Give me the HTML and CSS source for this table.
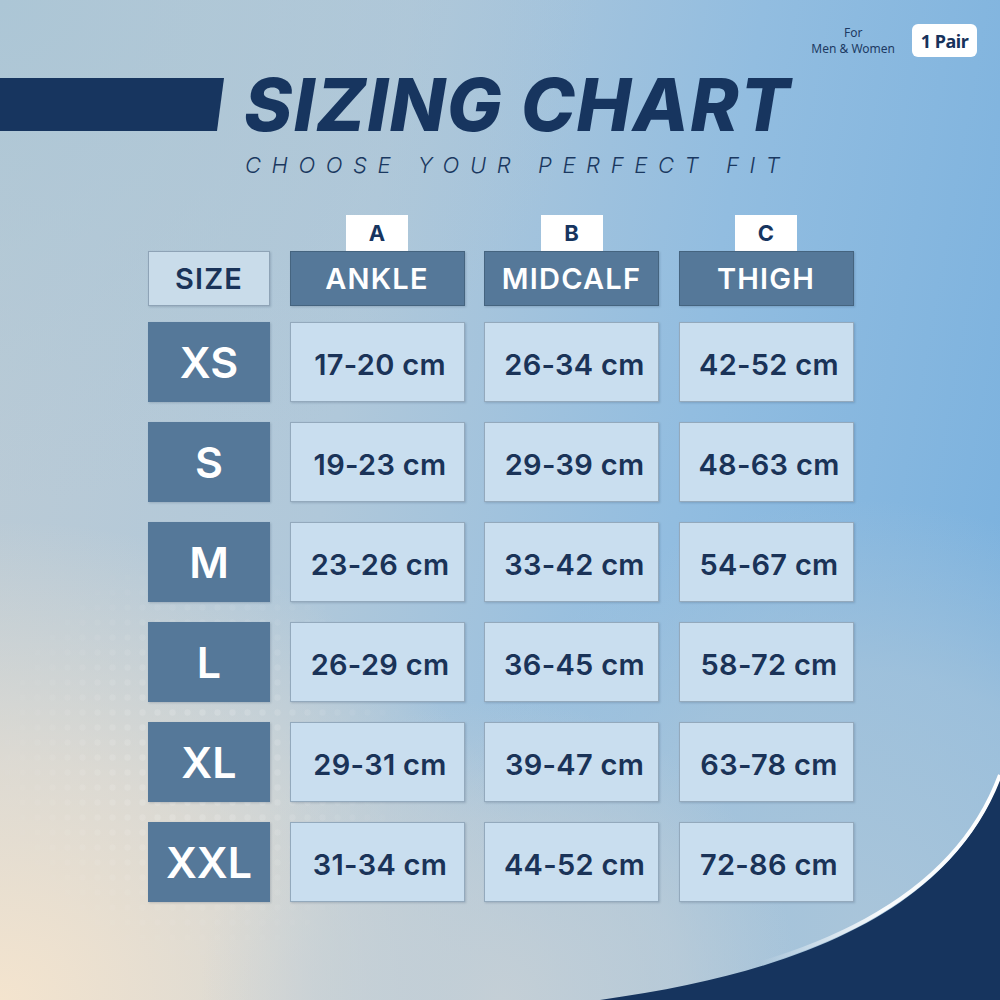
FILE: index.html
```html
<!DOCTYPE html>
<html>
<head>
<meta charset="utf-8">
<link rel="stylesheet" href="styles.css">
</head>
<body>
<div class="page">
  <svg class="deco" width="1000" height="1000" viewBox="0 0 1000 1000">
    <defs>
      <linearGradient id="edge" x1="760" y1="0" x2="1000" y2="0" gradientUnits="userSpaceOnUse">
        <stop offset="0" stop-color="#fff" stop-opacity="0"/>
        <stop offset="0.5" stop-color="#fff" stop-opacity="0.9"/>
        <stop offset="1" stop-color="#fff" stop-opacity="1"/>
      </linearGradient>
      <pattern id="dots" width="15" height="15" patternUnits="userSpaceOnUse">
        <circle cx="7.5" cy="7.5" r="3.2" fill="#fff" fill-opacity="0.2"/>
      </pattern>
      <radialGradient id="dotmask" cx="200" cy="760" r="220" gradientUnits="userSpaceOnUse">
        <stop offset="0" stop-color="#fff" stop-opacity="1"/>
        <stop offset="1" stop-color="#fff" stop-opacity="0"/>
      </radialGradient>
      <mask id="dm"><rect width="1000" height="1000" fill="url(#dotmask)"/></mask>
      <radialGradient id="haze" cx="860" cy="930" r="430" gradientUnits="userSpaceOnUse">
        <stop offset="0" stop-color="#a9c5da" stop-opacity="1"/>
        <stop offset="0.6" stop-color="#a9c5da" stop-opacity="0.7"/>
        <stop offset="1" stop-color="#a9c5da" stop-opacity="0"/>
      </radialGradient>
      <radialGradient id="haze2" cx="500" cy="1000" r="300" gradientUnits="userSpaceOnUse">
        <stop offset="0" stop-color="#c4cfd6" stop-opacity="1"/>
        <stop offset="0.6" stop-color="#c4cfd6" stop-opacity="0.6"/>
        <stop offset="1" stop-color="#c4cfd6" stop-opacity="0"/>
      </radialGradient>
    </defs>
    <rect width="1000" height="1000" fill="url(#haze)"/>
    <rect width="1000" height="1000" fill="url(#haze2)"/>
    <rect width="1000" height="1000" fill="url(#dots)" mask="url(#dm)"/>
    <path d="M1000,778 C955,900 820,970 600,1000 L1000,1000 Z" fill="#16345e"/>
    <path d="M1000,775 C955,897 820,967 600,997" fill="none" stroke="url(#edge)" stroke-width="4"/>
  </svg>

  <div class="content">
    <div class="topbar">
      <div class="for">For<br>Men &amp; Women</div>
      <div class="pair">1 Pair</div>
    </div>

    <div class="title-row">
      <div class="bar"></div>
      <h1 class="title">SIZING CHART</h1>
    </div>
    <p class="subtitle">CHOOSE YOUR PERFECT FIT</p>

    <div class="table">
      <div class="letters">
        <div></div>
        <div class="letter-cell"><span class="letter">A</span></div>
        <div class="letter-cell"><span class="letter">B</span></div>
        <div class="letter-cell"><span class="letter">C</span></div>
      </div>
      <div class="row head">
        <div class="cell size-head">SIZE</div>
        <div class="cell col-head">ANKLE</div>
        <div class="cell col-head">MIDCALF</div>
        <div class="cell col-head">THIGH</div>
      </div>
      <div class="body">
        <div class="row">
          <div class="cell size">XS</div>
          <div class="cell val">17-20 cm</div>
          <div class="cell val">26-34 cm</div>
          <div class="cell val">42-52 cm</div>
        </div>
        <div class="row">
          <div class="cell size">S</div>
          <div class="cell val">19-23 cm</div>
          <div class="cell val">29-39 cm</div>
          <div class="cell val">48-63 cm</div>
        </div>
        <div class="row">
          <div class="cell size">M</div>
          <div class="cell val">23-26 cm</div>
          <div class="cell val">33-42 cm</div>
          <div class="cell val">54-67 cm</div>
        </div>
        <div class="row">
          <div class="cell size">L</div>
          <div class="cell val">26-29 cm</div>
          <div class="cell val">36-45 cm</div>
          <div class="cell val">58-72 cm</div>
        </div>
        <div class="row">
          <div class="cell size">XL</div>
          <div class="cell val">29-31 cm</div>
          <div class="cell val">39-47 cm</div>
          <div class="cell val">63-78 cm</div>
        </div>
        <div class="row">
          <div class="cell size">XXL</div>
          <div class="cell val">31-34 cm</div>
          <div class="cell val">44-52 cm</div>
          <div class="cell val">72-86 cm</div>
        </div>
      </div>
    </div>
  </div>
</div>
</body>
</html>
```

FILE: styles.css
```css
* { box-sizing: border-box; }
html, body { margin: 0; padding: 0; }
body { width: 1000px; height: 1000px; overflow: hidden; font-family: Inter, "Noto Sans", sans-serif; }

.page {
  position: relative;
  width: 1000px;
  height: 1000px;
  overflow: hidden;
  background:
    radial-gradient(ellipse 560px 480px at 0% 100%, rgba(244,228,206,1) 0%, rgba(240,226,208,0.65) 50%, rgba(240,226,208,0) 100%),
    radial-gradient(ellipse 600px 500px at 0% 0%, rgba(172,198,214,1) 0%, rgba(172,198,214,0) 100%),
    linear-gradient(100deg, #bccbd5 0%, #b0c8da 35%, #92bde0 65%, #78b0de 100%);
}

.deco { position: absolute; left: 0; top: 0; z-index: 0; }
.content { position: relative; z-index: 1; }

.topbar {
  display: flex;
  justify-content: flex-end;
  align-items: center;
  gap: 17px;
  padding: 24px 23px 0 0;
  height: 57px;
}
.for {
  font-family: "Noto Sans", sans-serif;
  font-size: 12px;
  line-height: 16px;
  text-align: center;
  color: #1d3a63;
}
.pair {
  width: 65px;
  height: 33px;
  background: #fff;
  border-radius: 6px;
  display: flex;
  align-items: center;
  justify-content: center;
  font-family: "Noto Sans", sans-serif;
  font-weight: 700;
  font-size: 18px;
  letter-spacing: -0.5px;
  color: #17325b;
}

.title-row {
  display: flex;
  align-items: flex-start;
  margin-top: 21px;
  height: 53px;
}
.bar {
  width: 224px;
  height: 53px;
  background: #17355f;
  clip-path: polygon(0 0, 100% 0, calc(100% - 7px) 100%, 0 100%);
}
.title {
  margin: 0 0 0 20px;
  font-family: Inter, sans-serif;
  font-weight: 800;
  font-style: italic;
  font-size: 73px;
  line-height: 53px;
  letter-spacing: 1.5px;
  color: #17355f;
  white-space: nowrap;
}
.subtitle {
  margin: 23px 0 0 245px;
  font-family: Inter, sans-serif;
  font-weight: 300;
  font-style: italic;
  font-size: 22px;
  line-height: 22px;
  letter-spacing: 10.6px;
  color: #1a3860;
  white-space: nowrap;
}

.table { margin: 39px 0 0 148px; }
.letters, .row {
  display: grid;
  grid-template-columns: 122px 175px 175px 175px;
  column-gap: 19.5px;
}
.letter-cell { display: flex; justify-content: center; }
.letter {
  width: 62px;
  height: 36px;
  background: #fff;
  display: flex;
  align-items: center;
  justify-content: center;
  font-weight: 700;
  font-size: 22px;
  color: #17355f;
}
.cell {
  display: flex;
  align-items: center;
  justify-content: center;
  box-shadow: 1px 1px 2px rgba(30, 50, 80, 0.2);
}
.head .cell { height: 55px; font-size: 29px; font-weight: 600; letter-spacing: 1.2px; }
.size-head { background: #c9dcea; border: 1px solid #8ea3b6; color: #1a3358; }
.col-head { background: #557899; border: 1px solid #45647f; color: #fff; }

.body { display: flex; flex-direction: column; gap: 20px; margin-top: 16px; }
.body .row .cell { height: 80px; }
.size { background: #557899; color: #fff; font-size: 43px; font-weight: 600; }
.val {
  background: #c9deef;
  border: 1px solid #93a9bc;
  color: #1a3358;
  font-size: 29px;
  font-weight: 600;
  letter-spacing: 0.3px;
  padding: 4px 0 0 6px;
}
```
